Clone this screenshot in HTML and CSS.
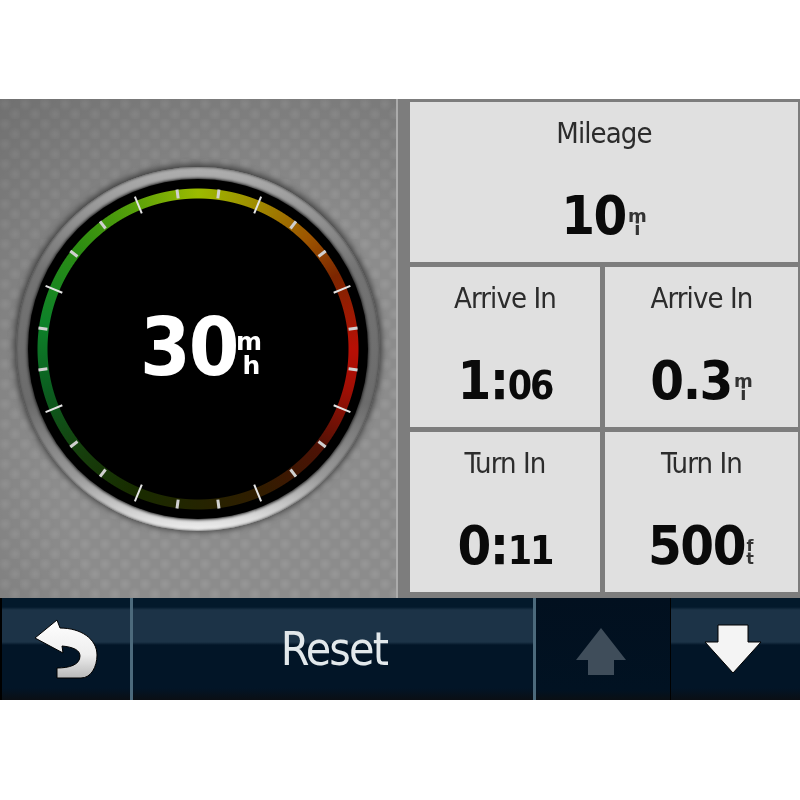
FILE: index.html
```html
<!DOCTYPE html>
<html lang="en">

<head>
    <meta charset="UTF-8">
    <meta name="viewport" content="width=device-width, initial-scale=1.0">
    <link rel="stylesheet" href="styles.css">
    <title>Trip computer</title>
</head>

<body>
    <div class="screen">
        <div class="main">
            <div class="gauge-panel">
                <div class="gauge">
                    <div class="gauge-face">
                        <div class="gauge-arc"></div>
                        <svg class="gauge-ticks" viewBox="-169 -169 338 338">
                            <g class="tick-short">
                                <line y1="-151" y2="-160" transform="rotate(7.5)"/>
                                <line y1="-151" y2="-160" transform="rotate(37.5)"/>
                                <line y1="-151" y2="-160" transform="rotate(52.5)"/>
                                <line y1="-151" y2="-160" transform="rotate(82.5)"/>
                                <line y1="-151" y2="-160" transform="rotate(97.5)"/>
                                <line y1="-151" y2="-160" transform="rotate(127.5)"/>
                                <line y1="-151" y2="-160" transform="rotate(142.5)"/>
                                <line y1="-151" y2="-160" transform="rotate(172.5)"/>
                                <line y1="-151" y2="-160" transform="rotate(187.5)"/>
                                <line y1="-151" y2="-160" transform="rotate(217.5)"/>
                                <line y1="-151" y2="-160" transform="rotate(232.5)"/>
                                <line y1="-151" y2="-160" transform="rotate(262.5)"/>
                                <line y1="-151" y2="-160" transform="rotate(277.5)"/>
                                <line y1="-151" y2="-160" transform="rotate(307.5)"/>
                                <line y1="-151" y2="-160" transform="rotate(322.5)"/>
                                <line y1="-151" y2="-160" transform="rotate(352.5)"/>
                            </g>
                            <g class="tick-long">
                                <line y1="-146" y2="-164" transform="rotate(22.5)"/>
                                <line y1="-146" y2="-164" transform="rotate(67.5)"/>
                                <line y1="-146" y2="-164" transform="rotate(112.5)"/>
                                <line y1="-146" y2="-164" transform="rotate(157.5)"/>
                                <line y1="-146" y2="-164" transform="rotate(202.5)"/>
                                <line y1="-146" y2="-164" transform="rotate(247.5)"/>
                                <line y1="-146" y2="-164" transform="rotate(292.5)"/>
                                <line y1="-146" y2="-164" transform="rotate(337.5)"/>
                            </g>
                        </svg>
                        <div class="speed">
                            <span class="speed-num">30</span>
                            <span class="unit unit-speed"><span>m</span><span>h</span></span>
                        </div>
                    </div>
                </div>
            </div>

            <div class="fields">
                <div class="field field-wide">
                    <div class="field-label">Mileage</div>
                    <div class="field-value">10<span class="unit"><span>m</span><span>i</span></span></div>
                </div>
                <div class="field">
                    <div class="field-label">Arrive In</div>
                    <div class="field-value">1:<span class="small-digits">06</span></div>
                </div>
                <div class="field">
                    <div class="field-label">Arrive In</div>
                    <div class="field-value">0.3<span class="unit"><span>m</span><span>i</span></span></div>
                </div>
                <div class="field">
                    <div class="field-label">Turn In</div>
                    <div class="field-value">0:<span class="small-digits">11</span></div>
                </div>
                <div class="field">
                    <div class="field-label">Turn In</div>
                    <div class="field-value">500<span class="unit unit-narrow"><span>f</span><span>t</span></span></div>
                </div>
            </div>
        </div>

        <div class="toolbar">
            <div class="tool tool-back">
                <svg width="70" height="64" viewBox="0 0 70 64">
                    <defs>
                        <linearGradient id="backFill" x1="0" y1="0" x2="0" y2="1">
                            <stop offset="0" stop-color="#fff"/>
                            <stop offset="0.6" stop-color="#eee"/>
                            <stop offset="1" stop-color="#b8b8b8"/>
                        </linearGradient>
                    </defs>
                    <path class="icon-back" d="M4 21 L26 3 L29 11 C50 11 66 22 66 38 C66 50 60 61 50 61 L26 61 L26 51 C38 51 49 48 49 39 C49 33 42 30 31 29 L32 36 Z"/>
                </svg>
            </div>
            <div class="tool tool-reset">Reset</div>
            <div class="tool tool-up off">
                <svg width="52" height="50" viewBox="0 0 52 50">
                    <path class="icon-dim" d="M26 1 L51 33 L39 33 L39 48 L13 48 L13 33 L1 33 Z"/>
                </svg>
            </div>
            <div class="tool tool-down">
                <svg width="58" height="50" viewBox="0 0 58 50">
                    <path class="icon-white" d="M14 1 L44 1 L44 18 L57 18 L29 49 L1 18 L14 18 Z"/>
                </svg>
            </div>
        </div>
    </div>
</body>
</html>
```

FILE: styles.css
```css
* {
    box-sizing: border-box;
    margin: 0;
    padding: 0;
}

body {
    background-color: #fff;
    font-family: "DejaVu Sans", sans-serif;
    font-stretch: condensed;
}

.screen {
    margin-top: 99px;
    height: 601px;
    display: flex;
    flex-direction: column;
    background-color: #8a8a8a;
    filter: blur(0.7px);
}

.main {
    height: 499px;
    display: flex;
}

/* left side with the dial */
.gauge-panel {
    width: 396px;
    display: flex;
    align-items: center;
    justify-content: center;
    background-color: #8c8c8c;
    background-image:
        radial-gradient(circle at 70% 70%, rgba(0, 0, 0, 0) 50%, rgba(0, 0, 0, 0.2) 100%),
        radial-gradient(circle at 25% 25%, rgba(255, 255, 255, 0.1) 0, rgba(255, 255, 255, 0) 34%),
        radial-gradient(circle at 75% 75%, rgba(255, 255, 255, 0.1) 0, rgba(255, 255, 255, 0) 34%);
    background-size: 100% 100%, 20px 20px, 20px 20px;
}

.gauge {
    width: 364px;
    height: 364px;
    padding: 12px;
    border-radius: 50%;
    background: linear-gradient(#b0b0b0, #747474 28%, #6c6c6c 65%, #9a9a9a 85%, #f0f0f0);
    box-shadow: 0 -1px 6px 2px #404040, inset 0 0 3px #333;
}

.gauge-face {
    position: relative;
    height: 100%;
    display: flex;
    align-items: center;
    justify-content: center;
    border-radius: 50%;
    background-color: #000;
    box-shadow: 0 0 3px 1px #222;
}

.gauge-arc {
    position: absolute;
    inset: 0;
    border-radius: 50%;
    background: conic-gradient(#9cbb00 0deg, #a08400 25deg, #9c5400 45deg, #7c2600 62deg, #b80f05 90deg, #a00f05 105deg, #4c1205 130deg, #321c00 155deg, #242400 180deg, #182c00 205deg, #163e0c 228deg, #0b5e20 255deg, #0e8229 280deg, #2c8c12 310deg, #56a00a 335deg, #9cbb00 360deg);
    -webkit-mask: radial-gradient(circle, transparent 150px, #000 151px, #000 160px, transparent 161px);
    mask: radial-gradient(circle, transparent 150px, #000 151px, #000 160px, transparent 161px);
}

.gauge-ticks {
    position: absolute;
    inset: 0;
    width: 100%;
    height: 100%;
}

.tick-short line {
    stroke: #d0d0d0;
    stroke-width: 3;
}

.tick-long line {
    stroke: #e4e4e4;
    stroke-width: 2;
}

.speed {
    position: relative;
    display: flex;
    align-items: flex-end;
    color: #fff;
    font-weight: bold;
    margin: 0 0 3px 6px;
}

.speed-num {
    font-size: 81px;
    line-height: 66px;
    width: 96px;
    display: block;
    letter-spacing: -2px;
}

/* units are stacked letters next to the number */
.unit {
    display: inline-flex;
    flex-direction: column;
    align-items: center;
    align-self: flex-end;
    font-size: 18px;
    font-stretch: normal;
    font-weight: bold;
    line-height: 13px;
    letter-spacing: 0;
}

.unit-speed {
    font-size: 25px;
    line-height: 24px;
    margin-bottom: 2px;
}

.unit-speed span:last-child {
    margin-left: 5px;
}

/* right side with the data fields */
.fields {
    flex: 1;
    display: grid;
    grid-template-columns: 190px 1fr;
    grid-template-rows: 160px 160px 160px;
    gap: 5px;
    padding: 3px 2px 5px 12px;
    background-color: #7d7d7d;
    border-left: 2px solid #ababab;
}

.field {
    display: flex;
    flex-direction: column;
    align-items: center;
    background-color: #e0e0e0;
    color: #111;
}

.field-wide {
    grid-column: 1 / 3;
}

.field-label {
    margin-top: 13px;
    font-size: 29px;
    line-height: 36px;
    letter-spacing: -0.9px;
    color: #2c2c2c;
}

.field-value {
    margin-top: 35px;
    display: flex;
    align-items: baseline;
    font-size: 54px;
    line-height: 60px;
    letter-spacing: -1.5px;
    font-weight: bold;
    color: #0a0a0a;
}

.field-value .unit {
    margin: 0 0 11px 2px;
    color: #333;
}

.field-value .unit-narrow {
    font-size: 16px;
    margin-left: 0;
    width: 10px;
}

.small-digits {
    font-size: 39px;
    letter-spacing: -2px;
}

/* bottom button bar */
.toolbar {
    flex: 1;
    display: grid;
    grid-template-columns: 133px 403px 135px 1fr;
    background-color: #021527;
}

.tool {
    display: flex;
    align-items: center;
    justify-content: center;
    background: linear-gradient(#03192b 0, #03192b 9px, #1c3347 12px, #1c3347 44px, #021527 47px, #021527 90px, #0a0f14 100%);
    border-right: 3px solid #4c6a7c;
}

.tool-back {
    border-left: 2px solid #000;
}

.tool-reset {
    color: #e2e8eb;
    font-size: 46px;
    letter-spacing: -1.8px;
    padding-left: 2px;
}

.tool-up {
    border-right: 1px solid #000;
    padding: 6px 5px 0 0;
}

.tool-up.off {
    background: linear-gradient(#02101f, #011222 90%, #0a0f14);
}

.tool-down {
    border-right: 0;
    padding-right: 5px;
}

.icon-back {
    fill: url(#backFill);
    stroke: #000;
    stroke-width: 1;
}

.icon-white {
    fill: #f4f4f4;
    stroke: #000;
    stroke-width: 1;
}

.icon-dim {
    fill: #3f4d5a;
}
```
